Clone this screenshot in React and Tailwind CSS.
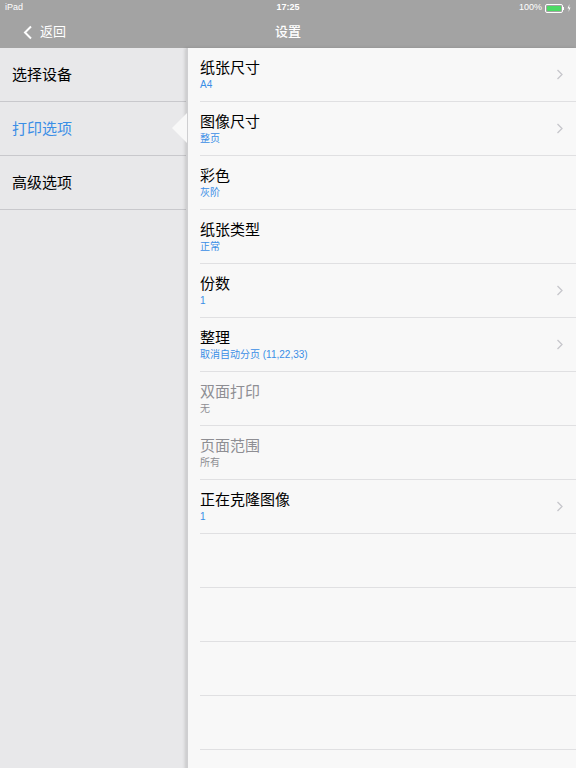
const font = { fontFamily: '"Helvetica Neue", "Liberation Sans", "Noto Sans CJK SC", sans-serif' }

const sideItems = [
  { label: '选择设备' },
  { label: '打印选项', active: true },
  { label: '高级选项' },
]

const rows = [
  { title: '纸张尺寸', value: 'A4', chevron: true },
  { title: '图像尺寸', value: '整页', chevron: true },
  { title: '彩色', value: '灰阶' },
  { title: '纸张类型', value: '正常' },
  { title: '份数', value: '1', chevron: true },
  { title: '整理', value: '取消自动分页 (11,22,33)', chevron: true },
  { title: '双面打印', value: '无', disabled: true },
  { title: '页面范围', value: '所有', disabled: true },
  { title: '正在克隆图像', value: '1', chevron: true },
]

function Chevron() {
  return (
    <svg width="8" height="13" viewBox="0 0 8 13" className="shrink-0">
      <path d="M1.5 2 L6 6.5 L1.5 11" fill="none" stroke="#c7c7cc" strokeWidth="1.3" />
    </svg>
  )
}

export default function App() {
  return (
    <div className="w-[576px] h-[768px] flex flex-col overflow-hidden bg-[#f8f8f8]" style={font}>
      <div className="h-[48px] bg-[#a3a3a3] text-white shrink-0 flex flex-col">
        <div className="h-[16px] flex items-center justify-between px-[5px] text-[9px] relative">
          <span>iPad</span>
          <span className="absolute left-1/2 -translate-x-1/2 font-semibold">17:25</span>
          <div className="flex items-center gap-[3px]">
            <span>100%</span>
            <div className="flex items-center">
              <div className="w-[18px] h-[9px] border border-white rounded-[2px] p-[1px]">
                <div className="w-full h-full bg-[#4cd964] rounded-[1px]" />
              </div>
              <div className="w-[1px] h-[3px] bg-white" />
            </div>
            <svg width="4" height="8" viewBox="0 0 4 8">
              <path d="M2.5 0 L0.5 4.5 H2 L1.5 8 L3.5 3.5 H2 Z" fill="white" />
            </svg>
          </div>
        </div>
        <div className="flex-1 flex items-center relative">
          <div className="flex items-center pl-[23px] gap-[7px]">
            <svg width="10" height="15" viewBox="0 0 10 15">
              <path d="M8 1.5 L2 7.5 L8 13.5" fill="none" stroke="white" strokeWidth="2" />
            </svg>
            <span className="text-[13px]">返回</span>
          </div>
          <span className="absolute left-1/2 -translate-x-1/2 text-[13px] font-medium">设置</span>
        </div>
      </div>
      <div className="flex-1 flex">
        <div className="w-[186px] bg-[#e8e8ea] shrink-0">
          {sideItems.map(item => (
            <div
              key={item.label}
              className={`h-[54px] flex items-center pl-[12px] pt-[2px] border-b border-[#c8c8cc] text-[15px] ${item.active ? 'text-[#3a8ee6]' : 'text-black'}`}
            >
              {item.label}
            </div>
          ))}
        </div>
        <div className="flex-1 relative bg-[#f8f8f8] border-l-2 border-[#cfcfd1] shadow-[-1px_0_3px_rgba(0,0,0,0.15)]">
          <div className="absolute left-[-16px] top-[65px] w-0 h-0 border-y-[15px] border-y-transparent border-r-[15px] border-r-[#f8f8f8]" />
          {rows.map(row => (
            <div key={row.title} className="h-[54px] ml-[12px] pr-[12px] border-b border-[#e0e0e2] flex items-center">
              <div className="flex-1 flex flex-col">
                <span className={`text-[15px] leading-[20px] ${row.disabled ? 'text-[#8e8e93]' : 'text-black'}`}>{row.title}</span>
                <span className={`text-[10px] leading-[14px] ${row.disabled ? 'text-[#8e8e93]' : 'text-[#3a8ee6]'}`}>{row.value}</span>
              </div>
              {row.chevron && <Chevron />}
            </div>
          ))}
          {[0, 1, 2, 3, 4].map(i => (
            <div key={i} className="h-[54px] ml-[12px] border-b border-[#e0e0e2]" />
          ))}
        </div>
      </div>
    </div>
  )
}
